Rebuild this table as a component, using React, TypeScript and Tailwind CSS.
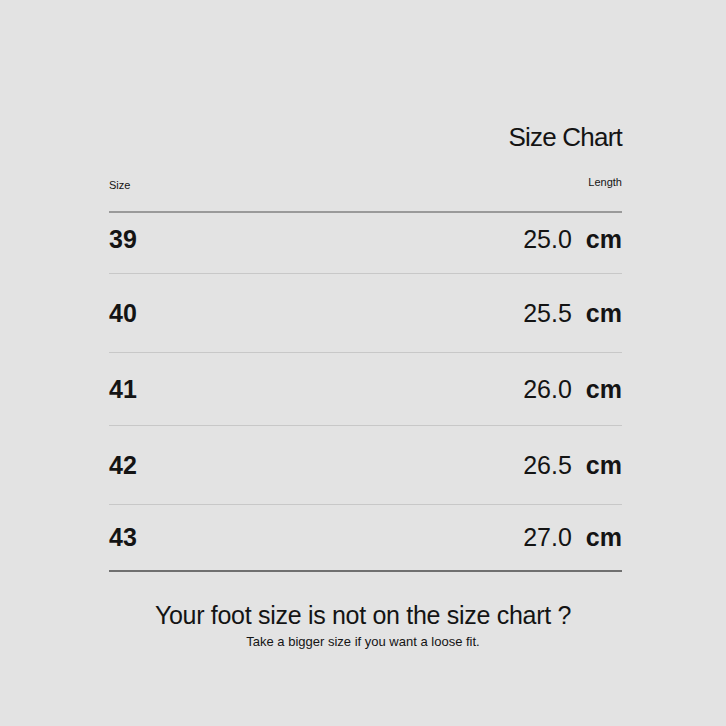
const rows = [
  { size: "39", length: "25.0", cls: "h-[61px] pb-2" },
  { size: "40", length: "25.5", cls: "h-[79px]" },
  { size: "41", length: "26.0", cls: "h-[73px]" },
  { size: "42", length: "26.5", cls: "h-[79px]" },
  { size: "43", length: "27.0", cls: "h-[65px]" },
];

export default function App() {
  return (
    <div className="h-[726px] w-[726px] bg-[#e3e3e3] font-['Liberation_Sans',Arial,sans-serif] text-[#141414]">
      <div className="ml-[109px] w-[513px] pt-[124px]">
        <h1 className="text-right text-[26px] leading-none font-normal tracking-[-0.03em]">
          Size Chart
        </h1>
        <div className="mt-[30px] flex items-end justify-between pb-[20px] text-[11px] leading-none">
          <span>Size</span>
          <span className="relative -top-[3px]">Length</span>
        </div>
        <div className="border-t-2 border-[#9a9a9a]">
          {rows.map((r, i) => (
            <div
              key={r.size}
              className={`flex items-center justify-between ${r.cls} ${
                i < rows.length - 1 ? "border-b border-[#c8c8c8]" : ""
              }`}
            >
              <span className="text-[25px] leading-none font-bold">{r.size}</span>
              <span className="flex items-baseline gap-[14px] text-[25px] leading-none">
                <span className="font-normal">{r.length}</span>
                <span className="font-bold">cm</span>
              </span>
            </div>
          ))}
        </div>
        <div className="border-t-2 border-[#707070]" />
      </div>
      <div className="mt-[31px] text-center">
        <p className="text-[25px] leading-none tracking-[-0.012em]">
          Your foot size is not on the size chart ?
        </p>
        <p className="mt-[7px] text-[13px] leading-none">
          Take a bigger size if you want a loose fit.
        </p>
      </div>
    </div>
  );
}
